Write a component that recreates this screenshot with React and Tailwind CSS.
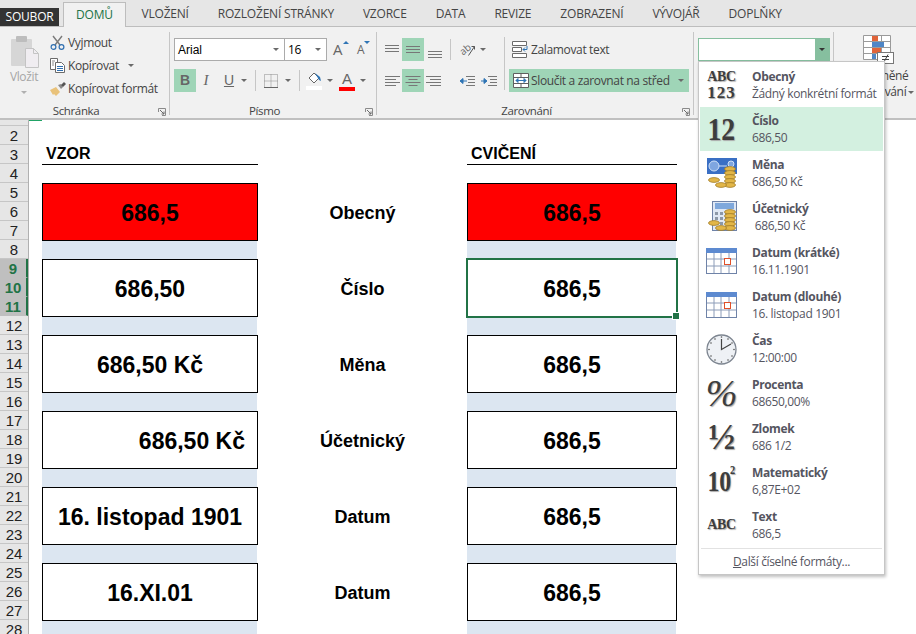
import { useMemo } from 'react';

const uiFont = "font-['Open_Sans','Noto_Sans',sans-serif]";
const tabs = ['VLOŽENÍ', 'ROZLOŽENÍ STRÁNKY', 'VZORCE', 'DATA', 'REVIZE', 'ZOBRAZENÍ', 'VÝVOJÁŘ', 'DOPLŇKY'];
const blocks = [
  { sample: '686,5', label: 'Obecný', red: true },
  { sample: '686,50', label: 'Číslo', selected: true },
  { sample: '686,50 Kč', label: 'Měna' },
  { sample: '686,50 Kč', label: 'Účetnický', right: true },
  { sample: '16. listopad 1901', label: 'Datum' },
  { sample: '16.XI.01', label: 'Datum' },
];
const formats = [
  { title: 'Obecný', sub: 'Žádný konkrétní formát', icon: 'abc123' },
  { title: 'Číslo', sub: '686,50', icon: '12', active: true },
  { title: 'Měna', sub: '686,50 Kč', icon: 'currency' },
  { title: 'Účetnický', sub: '\u00a0686,50 Kč', icon: 'account' },
  { title: 'Datum (krátké)', sub: '16.11.1901', icon: 'calendar' },
  { title: 'Datum (dlouhé)', sub: '16. listopad 1901', icon: 'calendar' },
  { title: 'Čas', sub: '12:00:00', icon: 'clock' },
  { title: 'Procenta', sub: '68650,00%', icon: 'percent' },
  { title: 'Zlomek', sub: '686 1/2', icon: 'fraction' },
  { title: 'Matematický', sub: '6,87E+02', icon: 'sci' },
  { title: 'Text', sub: '686,5', icon: 'abc' },
];

function Caret({ className = '' }) {
  return <span className={`inline-block w-0 h-0 border-x-[3px] border-x-transparent border-t-[3px] border-t-[#6a6a6a] ${className}`} />;
}

function Launcher({ className = '' }) {
  return (
    <svg width="8" height="8" viewBox="0 0 8 8" className={className}>
      <path d="M.5 4V.5H7.5V7.5H4" fill="none" stroke="#8a8a8a" />
      <path d="M2 2l4 4M6 3.5V6H3.5" fill="none" stroke="#6a6a6a" />
    </svg>
  );
}

function Lines({ widths, anchor = 'start' }) {
  return (
    <svg width="16" height="14" viewBox="0 0 16 14">
      {widths.map((w, i) => {
        const x = anchor === 'start' ? 1 : anchor === 'middle' ? 8 - w / 2 : 15 - w;
        return <path key={i} d={`M${x} ${2.5 + i * 3}h${w}`} stroke="#777" />;
      })}
    </svg>
  );
}

function VAlign({ y }) {
  return (
    <svg width="16" height="10" viewBox="0 0 16 10">
      {[0, 3, 6].map((d) => (
        <path key={d} d={`M1 ${y + d + 0.5}h14`} stroke="#777" />
      ))}
    </svg>
  );
}

function Clipboard() {
  return (
    <svg width="30" height="34" viewBox="0 0 30 34">
      <rect x="1" y="4" width="21" height="27" rx="1" fill="#d6d6d6" />
      <rect x="6" y="1" width="11" height="6" rx="1" fill="#bdbdbd" />
      <path d="M15.5 13.5h8l5 5v14h-13z" fill="#f0edf1" stroke="#c4c4c4" />
      <path d="M23.5 13.5v5h5" fill="none" stroke="#c4c4c4" />
    </svg>
  );
}

function Scissors() {
  return (
    <svg width="15" height="15" viewBox="0 0 15 15">
      <path d="M3 1l7 9M12 1l-7 9" stroke="#7a7a7a" strokeWidth="1.4" fill="none" />
      <circle cx="3.5" cy="12" r="2.4" fill="none" stroke="#2f6fb0" strokeWidth="1.2" />
      <circle cx="11.5" cy="12" r="2.4" fill="none" stroke="#2f6fb0" strokeWidth="1.2" />
    </svg>
  );
}

function CopyIcon() {
  return (
    <svg width="15" height="15" viewBox="0 0 15 15">
      <path d="M.5.5h7v11h-7z" fill="#fff" stroke="#6b6b6b" />
      <path d="M5.5 4.5h6l3 3v7h-9z" fill="#fff" stroke="#6b6b6b" />
      <path d="M7 8.5h6M7 10.5h6M7 12.5h6" stroke="#2f6fb0" />
      <path d="M2 3h3M2 5h2M2 7h2" stroke="#8a8a8a" />
    </svg>
  );
}

function PainterIcon() {
  return (
    <svg width="16" height="14" viewBox="0 0 16 14">
      <path d="M0 8l6-3 4 5-4 4-2-2-1 1z" fill="#e9c27a" />
      <path d="M8 3l3-1 2 3-2 2z" fill="#8a8a8a" />
      <path d="M11 3l3-3 2 2-3 3z" fill="#555" />
    </svg>
  );
}

function BorderIcon() {
  return (
    <svg width="14" height="14" viewBox="0 0 14 14">
      <path d="M.5.5h13v13H.5zM7 .5v13M.5 7h13" fill="none" stroke="#8a8a8a" strokeDasharray="1 1" />
      <path d="M0 13.5h14" stroke="#666" />
    </svg>
  );
}

function FillIcon() {
  return (
    <svg width="16" height="19" viewBox="0 0 16 19">
      <path d="M3 7l5-5 5 5-5 5z" fill="#fff" stroke="#666" />
      <path d="M9 2l5 4 1 4-2-1z" fill="#2f75b5" />
      <rect x="0" y="15" width="16" height="4" fill="#fff" />
    </svg>
  );
}

function OrientIcon() {
  return (
    <span className="relative w-[17px] h-[16px] block">
      <span className="absolute left-0 top-[1px] text-[10px] leading-[12px] tracking-normal text-[#666] -rotate-[40deg]">ab</span>
      <svg width="17" height="16" viewBox="0 0 17 16" className="absolute inset-0">
        <path d="M9.5 13.5l6-9M12.5 4.5h3v3" stroke="#555" fill="none" />
      </svg>
    </span>
  );
}

function IndentIcon({ inward }) {
  return (
    <svg width="16" height="12" viewBox="0 0 16 12">
      <path d="M7 1.5h9M9 4.5h7M9 7.5h7M7 10.5h9" stroke="#777" />
      {inward ? (
        <path d="M0 6h5M3 3.5L6 6 3 8.5z" stroke="#2f75b5" fill="#2f75b5" />
      ) : (
        <path d="M2 6h6M4 3.5L1 6l3 2.5z" stroke="#2f75b5" fill="#2f75b5" />
      )}
    </svg>
  );
}

function WrapIcon() {
  return (
    <svg width="17" height="17" viewBox="0 0 17 17">
      <path d="M.5 .5h14v4H.5zM.5 6.5h9v4H.5zM.5 12.5h14v4H.5z" fill="#fff" stroke="#6b6b6b" />
      <path d="M11 8.5h4V5M11 8.5l2-2M11 8.5l2 2" stroke="#2f75b5" fill="none" />
    </svg>
  );
}

function MergeIcon() {
  return (
    <svg width="16" height="15" viewBox="0 0 16 15">
      <path d="M.5.5h15v14H.5zM.5 4.5h15M.5 10.5h15M8 .5v4M8 10.5v4" fill="#fff" stroke="#5f5f5f" />
      <path d="M3 7.5h10M3 7.5l2-2v4zM13 7.5l-2-2v4z" stroke="#2f75b5" fill="#2f75b5" />
    </svg>
  );
}

function CondIcon() {
  return (
    <svg width="31" height="29" viewBox="0 0 31 29">
      <path d="M.5.5h27v24H.5zM9.5.5v24M18.5.5v24M.5 6.5h27M.5 12.5h27M.5 18.5h27" fill="#fff" stroke="#9a9a9a" />
      <rect x="9" y="1" width="6" height="5" fill="#e0643a" />
      <rect x="9" y="7" width="12" height="5" fill="#4f86c6" />
      <rect x="9" y="13" width="9" height="5" fill="#e0643a" />
      <rect x="9" y="19" width="4" height="5" fill="#4f86c6" />
      <rect x="14.5" y="17.5" width="16" height="11" fill="#fff" stroke="#777" />
      <path d="M19 21.5h7M19 24.5h7M25 19.5l-4 7.5" stroke="#444" fill="none" />
    </svg>
  );
}

function Calendar() {
  return (
    <svg width="31" height="27" viewBox="0 0 31 27">
      <rect x="0.5" y="0.5" width="30" height="25" fill="#fff" stroke="#6f83a8" />
      <rect x="0" y="0" width="31" height="5" fill="#5d8ad0" />
      <path d="M8 5v20M15 5v20M23 5v20M1 11h29M1 18h29" stroke="#8c9cb8" />
      <rect x="18.5" y="10.5" width="6" height="6" fill="#fff" stroke="#e0502a" />
    </svg>
  );
}

function Clock() {
  return (
    <svg width="31" height="31" viewBox="0 0 31 31">
      <circle cx="15.5" cy="15.5" r="14.5" fill="#eef1f5" stroke="#7d8590" strokeWidth="1.3" />
      <path d="M15.5 5v10.5L25 10" stroke="#444" strokeWidth="1.2" fill="none" />
      {[[15.5, 3], [28, 15.5], [15.5, 28], [3, 15.5], [22, 5], [26, 9], [26, 22], [22, 26], [9, 26], [5, 22], [5, 9], [9, 5]].map(([x, y], i) => (
        <circle key={i} cx={x} cy={y} r="0.8" fill="#555" />
      ))}
    </svg>
  );
}

function Coins({ x = 0 }) {
  return (
    <g transform={`translate(${x} 0)`}>
      {[0, 4, 8, 12, 16].map((d) => (
        <ellipse key={d} cx="22" cy={11 + d} rx="5.5" ry="2.4" fill="#e2b648" stroke="#9a7420" strokeWidth="0.7" />
      ))}
      <ellipse cx="6" cy="22" rx="5.5" ry="2.4" fill="#e2b648" stroke="#9a7420" strokeWidth="0.7" />
      <ellipse cx="13" cy="27" rx="5.5" ry="2.4" fill="#e2b648" stroke="#9a7420" strokeWidth="0.7" />
    </g>
  );
}

function CurrencyIcon() {
  return (
    <svg width="32" height="30" viewBox="0 0 32 30">
      <rect x="1" y="0" width="30" height="16" fill="#3a6fc4" />
      <ellipse cx="8" cy="8" rx="5" ry="5" fill="#7fa6e0" stroke="#cfe0f7" />
      <path d="M13 8h8" stroke="#cfe0f7" />
      <circle cx="25" cy="6" r="3" fill="#7fa6e0" stroke="#cfe0f7" />
      <Coins x={2} />
    </svg>
  );
}

function AccountIcon() {
  return (
    <svg width="34" height="33" viewBox="0 0 34 33">
      <rect x="7.5" y="0.5" width="24" height="29" fill="#dfe8f5" stroke="#6f83a8" />
      <rect x="10" y="2" width="19" height="6" fill="#7fa8dc" />
      {[10, 15, 20].map((x) => [11, 16, 21].map((y) => <rect key={`${x}${y}`} x={x} y={y} width="3" height="3" fill="#8c98a8" />))}
      <rect x="26" y="20" width="3" height="8" fill="#d8583c" />
      <Coins x={3} />
    </svg>
  );
}

function FormatIcon({ icon }) {
  const serif = "font-['Liberation_Serif',serif] font-bold text-[#3d3d3d] [text-shadow:1px_1px_1px_#aaa]";
  if (icon === 'abc123') {
    return (
      <div className={`${serif} flex flex-col items-center leading-none`}>
        <span className="text-[14px] leading-[14px]">ABC</span>
        <span className="text-[17px] leading-[17px] tracking-[1px]">123</span>
      </div>
    );
  }
  if (icon === '12') return <span className={`${serif} text-[31px] leading-none scale-x-90`}>12</span>;
  if (icon === 'percent') return <span className={`${serif} text-[38px] leading-none italic font-normal`}>%</span>;
  if (icon === 'fraction') return <span className={`${serif} text-[36px] leading-none`}>½</span>;
  if (icon === 'sci') {
    return (
      <span className={`${serif} text-[30px] leading-none flex items-start scale-x-[0.8]`}>
        10<span className="text-[13px] leading-none -ml-[1px] -mt-[3px]">2</span>
      </span>
    );
  }
  if (icon === 'abc') return <span className={`${serif} text-[14px] leading-none`}>ABC</span>;
  if (icon === 'currency') return <CurrencyIcon />;
  if (icon === 'account') return <AccountIcon />;
  if (icon === 'calendar') return <Calendar />;
  return <Clock />;
}

function Group({ width, label, children, launcher, last }) {
  return (
    <div className={`flex flex-col h-[83px] mt-[5px] shrink-0 ${last ? '' : 'border-r border-[#c6c6c6]'}`} style={{ width }}>
      <div className="flex-1 min-h-0">{children}</div>
      <div className="relative top-[3px] h-[14px] flex items-center justify-center text-[11.5px] text-[#444] pr-[17px]">
        {label && <span>{label}</span>}
        {launcher && <Launcher className="absolute right-[3px] top-[4px]" />}
      </div>
    </div>
  );
}

function ClipRow({ icon, text, caret }) {
  return (
    <div className="flex items-center h-[23px]">
      <span className="w-[18px] flex justify-start">{icon}</span>
      <span>{text}</span>
      {caret && <Caret className="ml-[9px]" />}
    </div>
  );
}

function Ribbon() {
  return (
    <div className="flex h-[93px] bg-[#f1f1f1] border-b-2 border-[#c0c0c0] text-[12px] text-[#444] tracking-[-0.35px]">
      <Group width={170} label="Schránka" launcher>
        <div className="flex">
          <div className="w-[50px] flex flex-col items-center pt-[3px] text-[#a6a6a6]">
            <Clipboard />
            <span className="-mt-[1px] -ml-[2px]">Vložit</span>
            <Caret className="mt-[5px] -ml-[2px] border-t-[#b0b0b0]" />
          </div>
          <div className="flex flex-col -mt-[1px]">
            <ClipRow icon={<Scissors />} text="Vyjmout" />
            <ClipRow icon={<CopyIcon />} text="Kopírovat" caret />
            <ClipRow icon={<PainterIcon />} text="Kopírovat formát" />
          </div>
        </div>
      </Group>

      <Group width={207} label="Písmo" launcher>
        <div className="pl-[4px] pt-[6px]">
          <div className="flex items-center h-[23px]">
            <div className="w-[111px] h-[23px] bg-white border border-[#ababab] flex items-center justify-between px-[3px] pr-[5px] text-black font-['Liberation_Sans',sans-serif] tracking-normal">
              Arial <Caret />
            </div>
            <div className="w-[43px] h-[23px] -ml-px bg-white border border-[#ababab] flex items-center justify-between px-[3px] pr-[5px] text-black">
              16 <Caret />
            </div>
            <div className="relative ml-[6px] w-[14px] text-[15px] text-[#666] leading-none">
              A<span className="absolute right-[-2px] top-[-1px] border-x-[3px] border-x-transparent border-b-[3px] border-b-[#2f75b5]" />
            </div>
            <div className="relative ml-[10px] w-[10px] text-[12px] text-[#666] leading-none">
              A<span className="absolute right-[-3px] top-[-3px] border-x-[3px] border-x-transparent border-t-[3px] border-t-[#2f75b5]" />
            </div>
          </div>
          <div className="flex items-center h-[23px] mt-[8px] text-[14px] text-[#666] tracking-normal">
            <div className="w-[22px] h-[23px] bg-[#9fd5b7] flex items-center justify-center font-bold font-['Liberation_Sans',sans-serif]">B</div>
            <span className="w-[22px] -ml-[1px] text-center italic font-['Liberation_Serif',serif] text-[15px]">I</span>
            <span className="w-[22px] ml-[1px] text-center underline font-['Liberation_Sans',sans-serif]">U</span>
            <Caret className="ml-[1px]" />
            <span className="ml-[8px] w-px h-[21px] bg-[#c6c6c6]" />
            <span className="ml-[8px]"><BorderIcon /></span>
            <Caret className="ml-[7px]" />
            <span className="ml-[8px] w-px h-[21px] bg-[#c6c6c6]" />
            <span className="ml-[6px]"><FillIcon /></span>
            <Caret className="ml-[5px]" />
            <span className="ml-[6px] flex flex-col items-center w-[16px] leading-none text-[15px] font-['Liberation_Sans',sans-serif]">
              A<span className="w-[16px] h-[4px] bg-[#ff0000] mt-[1px]" />
            </span>
            <Caret className="ml-[5px]" />
          </div>
        </div>
      </Group>

      <Group width={317} label="Zarovnání" launcher>
        <div className="pl-[7px] pt-[6px] flex">
          <div className="flex flex-col gap-[8px]">
            <div className="flex h-[23px] items-center">
              <span className="w-[18px]"><VAlign y={0} /></span>
              <span className="w-[22px] h-[23px] bg-[#9fd5b7] flex items-center justify-center"><VAlign y={1} /></span>
              <span className="w-[18px] pl-[3px] pt-[10px]"><VAlign y={1} /></span>
            </div>
            <div className="flex h-[23px] items-center">
              <span className="w-[18px]"><Lines widths={[15, 11, 15, 11]} /></span>
              <span className="w-[22px] h-[23px] bg-[#9fd5b7] flex items-center justify-center"><Lines widths={[15, 9, 15, 9]} anchor="middle" /></span>
              <span className="w-[18px] pl-[2px]"><Lines widths={[15, 11, 15, 11]} anchor="end" /></span>
            </div>
          </div>
          <span className="ml-[8px] mt-[1px] w-px h-[21px] bg-[#c6c6c6]" />
          <div className="ml-[8px] flex flex-col gap-[8px] w-[44px]">
            <div className="flex h-[23px] items-center">
              <OrientIcon />
              <Caret className="ml-[4px]" />
            </div>
            <div className="flex h-[23px] items-center gap-[6px]">
              <IndentIcon />
              <IndentIcon inward />
            </div>
          </div>
          <span className="ml-[1px] -mt-[1px] w-px h-[53px] bg-[#c6c6c6]" />
          <div className="ml-[4px] flex flex-col gap-[8px]">
            <div className="flex h-[23px] items-center pl-[3px]">
              <WrapIcon />
              <span className="ml-[2px]">Zalamovat text</span>
            </div>
            <div className="flex h-[23px] w-[180px] items-center pl-[4px] bg-[#9fd5b7]">
              <MergeIcon />
              <span className="ml-[2px]">Sloučit a zarovnat na střed</span>
              <Caret className="ml-auto mr-[5px]" />
            </div>
          </div>
        </div>
      </Group>

      <Group width={140}>
        <div className="pl-[4px] pt-[6px]">
          <div className="w-[132px] h-[23px] bg-white border border-[#86bf9f] flex justify-end">
            <span className="w-[14px] bg-[#86bf9f] flex items-center justify-center">
              <Caret className="border-t-[#333]" />
            </span>
          </div>
        </div>
      </Group>

      <Group width={83} last>
        <div className="flex flex-col items-center pt-[3px] pl-[5px] leading-[16px] whitespace-nowrap">
          <CondIcon />
          <span className="mt-[4px]">Podmíněné</span>
          <span className="flex items-center">formátování<Caret className="ml-[2px]" /></span>
        </div>
      </Group>
    </div>
  );
}

function FormatMenu() {
  return (
    <div className={`absolute left-[698px] top-[61px] w-[187px] h-[514px] bg-white border border-[#c6c6c6] shadow-[1px_2px_3px_rgba(0,0,0,0.25)] p-px text-[12px] text-[#55555f] tracking-[-0.35px] ${uiFont}`}>
      {formats.map((item) => (
        <div key={item.title} className={`flex h-[44px] ${item.active ? 'bg-[#d3f0e0]' : ''}`}>
          <div className="w-[52px] shrink-0 flex items-center justify-center pr-[9px]">
            <FormatIcon icon={item.icon} />
          </div>
          <div className="flex flex-col justify-center leading-[17px] whitespace-nowrap">
            <span className="font-bold">{item.title}</span>
            <span>{item.sub}</span>
          </div>
        </div>
      ))}
      <div className="mt-[1px] mx-[1px] border-t border-[#e2e2e2] h-[27px] flex items-center justify-center">
        <span><span className="underline">D</span>alší číselné formáty...</span>
      </div>
    </div>
  );
}

function ValueBox({ children, red, right, selected }) {
  return (
    <div
      className={`relative flex items-center pt-[2px] text-[23px] font-bold text-black
        ${right ? 'justify-end pr-[12px]' : 'justify-center'}
        ${red ? 'bg-[#ff0000]' : 'bg-white'}
        ${selected ? 'border-2 border-[#217346] -m-px h-[60px]' : 'h-[58px] border border-black'}`}
    >
      {children}
      {selected && <span className="absolute -right-[4px] -bottom-[4px] w-[6px] h-[6px] bg-[#217346] border border-white box-content" />}
    </div>
  );
}

function Sheet() {
  const rowNumbers = useMemo(() => Array.from({ length: 27 }, (_, i) => i + 2), []);
  return (
    <div className="flex h-[514px] font-['Liberation_Sans',Arial,sans-serif]">
      <div className="w-[29px] shrink-0 bg-[#e6e6e6] border-r border-[#b0b0b0] overflow-hidden">
        <div className="h-[6px] border-b border-[#c6c6c6]" />
        {rowNumbers.map((n) => {
          const sel = n >= 9 && n <= 11;
          return (
            <div
              key={n}
              className={`h-[19px] pt-[2px] flex items-center justify-center text-[15px] border-b
                ${sel ? 'bg-[#bfbfbf] text-[#217346] font-bold border-[#bfbfbf] border-r-2 border-r-[#217346]' : 'text-[#222] border-[#c6c6c6]'}`}
            >
              {n}
            </div>
          );
        })}
      </div>
      <div className="flex-1 bg-white overflow-hidden">
        <div className="w-[13px] h-[1px] bg-[#21a366]" />
        <div className="pl-[13px] pt-[24px]">
          <div className="grid grid-cols-[216px_209px_210px] h-[20px] text-[16px] font-bold text-black leading-[16px]">
            <div className="border-b border-black pl-[4px] pt-[1px]">VZOR</div>
            <div />
            <div className="border-b border-black pl-[4px] pt-[1px]">CVIČENÍ</div>
          </div>
          <div className="h-[18px]" />
          {blocks.map((b) => (
            <div key={b.sample + b.label}>
              <div className="grid grid-cols-[216px_209px_210px]">
                <ValueBox red={b.red} right={b.right}>{b.sample}</ValueBox>
                <div className="flex items-center justify-center pt-[2px] text-[18px] font-bold text-black">{b.label}</div>
                <ValueBox red={b.red} selected={b.selected}>686,5</ValueBox>
              </div>
              <div className="grid grid-cols-[215px_210px_209px] h-[18px]">
                <div className="bg-[#dce6f1]" />
                <div />
                <div className="bg-[#dce6f1]" />
              </div>
            </div>
          ))}
        </div>
      </div>
    </div>
  );
}

export default function App() {
  return (
    <div className={`relative w-[916px] h-[634px] overflow-hidden bg-white ${uiFont}`}>
      <div className="flex items-end h-[27px] bg-[#e6e6e6] border-b border-[#bdbdbd] text-[12px] text-[#444] tracking-[-0.2px]">
        <div className="w-[59px] h-[18px] bg-[#333333] text-white flex items-center justify-center">SOUBOR</div>
        <div className="ml-[4px] w-[63px] h-[25px] -mb-px bg-[#f1f1f1] border border-b-0 border-[#bdbdbd] text-[#217346] flex items-center justify-center">DOMŮ</div>
        <div className="flex ml-[1px] h-[24px] items-center">
          {tabs.map((t) => (
            <span key={t} className="px-[14.5px] whitespace-nowrap">{t}</span>
          ))}
        </div>
      </div>
      <Ribbon />
      <Sheet />
      <FormatMenu />
    </div>
  );
}
